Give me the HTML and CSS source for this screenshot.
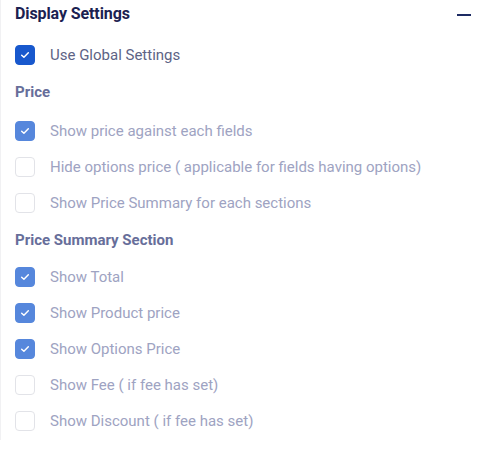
FILE: index.html
```html
<!DOCTYPE html>
<html>
<head>
<meta charset="utf-8">
<link rel="stylesheet" href="styles.css">
</head>
<body>
<div class="panel">
  <div class="header">
    <h2 class="title">Display Settings</h2>
    <span class="collapse"></span>
  </div>
  <label class="row"><span class="box on strong"><svg viewBox="0 0 20 20"><path d="M6.3 10.2l2.5 2.4 4.9-5" /></svg></span><span class="label main">Use Global Settings</span></label>
  <div class="section first">Price</div>
  <label class="row"><span class="box on"><svg viewBox="0 0 20 20"><path d="M6.3 10.2l2.5 2.4 4.9-5" /></svg></span><span class="label">Show price against each fields</span></label>
  <label class="row"><span class="box"></span><span class="label">Hide options price ( applicable for fields having options)</span></label>
  <label class="row"><span class="box"></span><span class="label">Show Price Summary for each sections</span></label>
  <div class="section">Price Summary Section</div>
  <label class="row"><span class="box on"><svg viewBox="0 0 20 20"><path d="M6.3 10.2l2.5 2.4 4.9-5" /></svg></span><span class="label">Show Total</span></label>
  <label class="row"><span class="box on"><svg viewBox="0 0 20 20"><path d="M6.3 10.2l2.5 2.4 4.9-5" /></svg></span><span class="label">Show Product price</span></label>
  <label class="row"><span class="box on"><svg viewBox="0 0 20 20"><path d="M6.3 10.2l2.5 2.4 4.9-5" /></svg></span><span class="label">Show Options Price</span></label>
  <label class="row"><span class="box"></span><span class="label">Show Fee ( if fee has set)</span></label>
  <label class="row"><span class="box"></span><span class="label">Show Discount ( if fee has set)</span></label>
</div>
</body>
</html>
```
FILE: styles.css
```css
* { box-sizing: border-box; }
html, body { margin: 0; padding: 0; background: #fff; }
body { font-family: Roboto, "Noto Sans", sans-serif; }
.panel {
  width: 491px;
  height: 440px;
  border-left: 1px solid #f1f1f3;
  padding: 2px 20px 0 14px;
  display: flex;
  flex-direction: column;
}
.header {
  display: flex;
  align-items: center;
  justify-content: space-between;
  height: 22px;
  margin-bottom: 13px;
}
.title {
  margin: 0;
  font-size: 16px;
  font-weight: 700;
  color: #1b2151;
  letter-spacing: -0.1px;
}
.collapse {
  display: block;
  width: 14px;
  height: 2px;
  background: #1d2b63;
  margin-top: 4px;
}
.row {
  display: flex;
  align-items: center;
  height: 36px;
  gap: 15px;
}
.box {
  width: 20px;
  height: 20px;
  border-radius: 4px;
  border: 1px solid #e2e3e8;
  background: #fff;
  flex: none;
  display: flex;
  align-items: center;
  justify-content: center;
}
.box.on {
  background: #5687dc;
  border-color: #5687dc;
}
.box.on.strong {
  background: #1858cd;
  border-color: #1858cd;
}
.box svg { width: 20px; height: 20px; }
.box svg path {
  fill: none;
  stroke: #fff;
  stroke-width: 1.6;
  stroke-linecap: round;
  stroke-linejoin: round;
}
.label {
  font-size: 15px;
  color: #9ea3c2;
}
.label.main { color: #5d6385; }
.section {
  height: 38px;
  display: flex;
  align-items: center;
  font-size: 15px;
  font-weight: 700;
  color: #676e9a;
}
.section.first {
  height: 40px;
  padding-bottom: 2px;
}
```
